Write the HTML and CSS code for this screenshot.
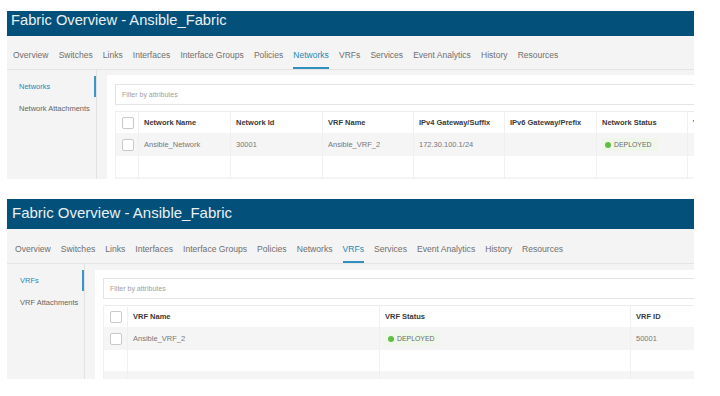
FILE: index.html
```html
<!DOCTYPE html>
<html lang="en">

<head>
    <meta charset="UTF-8">
    <meta name="viewport" content="width=device-width, initial-scale=1.0">
    <title>Fabric Overview - Ansible_Fabric</title>

    <link rel="stylesheet" href="styles.css">
</head>

<body>
    <!-- Networks tab -->
    <section class="fabric fabric-networks">
        <header class="fabric-header">
            <h1>Fabric Overview - Ansible_Fabric</h1>
        </header>

        <nav class="tabs">
            <a class="tab">Overview</a>
            <a class="tab">Switches</a>
            <a class="tab">Links</a>
            <a class="tab">Interfaces</a>
            <a class="tab">Interface Groups</a>
            <a class="tab">Policies</a>
            <a class="tab active">Networks</a>
            <a class="tab">VRFs</a>
            <a class="tab">Services</a>
            <a class="tab">Event Analytics</a>
            <a class="tab">History</a>
            <a class="tab">Resources</a>
        </nav>

        <div class="fabric-body">
            <aside class="side-nav">
                <div class="side-item active">Networks</div>
                <div class="side-item">Network Attachments</div>
            </aside>

            <div class="content">
                <div class="filter">Filter by attributes</div>
                <table class="grid grid-networks">
                    <colgroup>
                        <col style="width: 23px">
                        <col style="width: 92px">
                        <col style="width: 92px">
                        <col style="width: 91px">
                        <col style="width: 91px">
                        <col style="width: 92px">
                        <col style="width: 91px">
                        <col style="width: 92px">
                    </colgroup>
                    <thead>
                        <tr>
                            <th><span class="checkbox"></span></th>
                            <th>Network Name</th>
                            <th>Network Id</th>
                            <th>VRF Name</th>
                            <th>IPv4 Gateway/Suffix</th>
                            <th>IPv6 Gateway/Prefix</th>
                            <th>Network Status</th>
                            <th>VLAN ID</th>
                        </tr>
                    </thead>
                    <tbody>
                        <tr>
                            <td><span class="checkbox"></span></td>
                            <td>Ansible_Network</td>
                            <td>30001</td>
                            <td>Ansible_VRF_2</td>
                            <td>172.30.100.1/24</td>
                            <td></td>
                            <td><span class="status"><span class="dot"></span>DEPLOYED</span></td>
                            <td></td>
                        </tr>
                        <tr class="empty">
                            <td></td><td></td><td></td><td></td><td></td><td></td><td></td><td></td>
                        </tr>
                        <tr class="empty">
                            <td></td><td></td><td></td><td></td><td></td><td></td><td></td><td></td>
                        </tr>
                    </tbody>
                </table>
            </div>
        </div>
    </section>

    <!-- VRFs tab -->
    <section class="fabric fabric-vrfs">
        <header class="fabric-header">
            <h1>Fabric Overview - Ansible_Fabric</h1>
        </header>

        <nav class="tabs">
            <a class="tab">Overview</a>
            <a class="tab">Switches</a>
            <a class="tab">Links</a>
            <a class="tab">Interfaces</a>
            <a class="tab">Interface Groups</a>
            <a class="tab">Policies</a>
            <a class="tab">Networks</a>
            <a class="tab active">VRFs</a>
            <a class="tab">Services</a>
            <a class="tab">Event Analytics</a>
            <a class="tab">History</a>
            <a class="tab">Resources</a>
        </nav>

        <div class="fabric-body">
            <aside class="side-nav">
                <div class="side-item active">VRFs</div>
                <div class="side-item">VRF Attachments</div>
            </aside>

            <div class="content">
                <div class="filter">Filter by attributes</div>
                <table class="grid grid-vrfs">
                    <colgroup>
                        <col style="width: 24px">
                        <col style="width: 252px">
                        <col style="width: 251px">
                        <col style="width: 92px">
                    </colgroup>
                    <thead>
                        <tr>
                            <th><span class="checkbox"></span></th>
                            <th>VRF Name</th>
                            <th>VRF Status</th>
                            <th>VRF ID</th>
                        </tr>
                    </thead>
                    <tbody>
                        <tr>
                            <td><span class="checkbox"></span></td>
                            <td>Ansible_VRF_2</td>
                            <td><span class="status"><span class="dot"></span>DEPLOYED</span></td>
                            <td>50001</td>
                        </tr>
                        <tr class="empty">
                            <td></td><td></td><td></td><td></td>
                        </tr>
                        <tr class="empty">
                            <td></td><td></td><td></td><td></td>
                        </tr>
                    </tbody>
                </table>
            </div>
        </div>
    </section>
</body>

</html>
```

FILE: styles.css
```css
body {
    font-family: 'Liberation Sans', Arial, sans-serif;
    background-color: #ffffff;
    margin: 0;
    padding: 0;
    color: #666;
}

.fabric {
    width: 687px;
    margin-left: 7px;
    overflow: hidden;
    background-color: #f4f4f4;
}

.fabric-networks {
    margin-top: 11px;
    height: 168px;
}

.fabric-vrfs {
    margin-top: 20px;
    height: 180px;
}

/* dark title bar */
.fabric-header {
    background-color: #03507a;
}

.fabric-header h1 {
    margin: 0;
    font-weight: normal;
    color: #e9f0f4;
    white-space: nowrap;
}

.fabric-networks .fabric-header {
    height: 25px;
    padding-left: 4px;
}

.fabric-networks .fabric-header h1 {
    font-size: 14.7px;
    line-height: 18px;
}

.fabric-vrfs .fabric-header {
    height: 30px;
    padding-left: 5px;
}

.fabric-vrfs .fabric-header h1 {
    font-size: 15px;
    line-height: 28px;
}

/* tab strip */
.tabs {
    display: flex;
    height: 33px;
    border-bottom: 1px solid #e4e4e4;
    white-space: nowrap;
}

.fabric-networks .tabs {
    padding-left: 6px;
    gap: 10.2px;
    font-size: 8.5px;
}

.fabric-vrfs .tabs {
    height: 34px;
    padding-left: 8px;
    gap: 10px;
    font-size: 8.6px;
}

.tab {
    box-sizing: border-box;
    padding-top: 7px;
    line-height: 24px;
    color: #6f6f6f;
    border-bottom: 2px solid transparent;
}

.fabric-vrfs .tab {
    padding-top: 8px;
}

.tab.active {
    color: #2a86b2;
    border-bottom-color: #2f8fbe;
}

/* body: side menu + main card */
.fabric-body {
    display: flex;
    align-items: flex-start;
}

.side-nav {
    box-sizing: border-box;
    flex: 0 0 auto;
    height: 200px;
    padding-top: 6px;
    border-right: 1px solid #e2e2e2;
    font-size: 7.5px;
}

.fabric-networks .side-nav {
    width: 90px;
}

.fabric-vrfs .side-nav {
    width: 78px;
}

.side-item {
    height: 21px;
    line-height: 21px;
    margin-bottom: 1px;
    padding-left: 12px;
    color: #666;
    border-right: 2px solid transparent;
    white-space: nowrap;
}

.fabric-vrfs .side-item {
    padding-left: 13px;
}

.side-item.active {
    color: #2a86b2;
    border-right-color: #3b95c5;
}

.content {
    flex: 0 0 auto;
    width: 720px;
    height: 200px;
    margin-left: 10px;
    padding: 9px 0 0 8px;
    background-color: #ffffff;
}

.fabric-networks .content {
    margin-top: 5px;
}

.fabric-vrfs .content {
    margin-top: 6px;
    padding-top: 8px;
}

.filter {
    box-sizing: border-box;
    height: 21px;
    line-height: 19px;
    margin-bottom: 6px;
    padding-left: 6px;
    border: 1px solid #e4e4e4;
    font-size: 7px;
    color: #a0a0a0;
}

/* data table */
.grid {
    border-collapse: collapse;
    table-layout: fixed;
    font-size: 7.5px;
    border-top: 1px solid #ececec;
    border-left: 1px solid #ececec;
}

.grid-networks {
    width: 664px;
}

.grid-vrfs {
    width: 619px;
}

.grid th,
.grid td {
    padding: 0 0 0 5px;
    text-align: left;
    border-left: 1px solid #f0f0f0;
    white-space: nowrap;
    overflow: hidden;
}

.grid th {
    height: 21px;
    color: #383838;
    font-weight: bold;
}

.grid td {
    height: 23px;
    color: #777;
}

.grid tbody tr:nth-child(odd) {
    background-color: #f5f5f5;
}

.grid tr.empty td {
    height: 21px;
}

.grid th:first-child,
.grid td:first-child {
    padding-left: 6px;
}

.checkbox {
    display: block;
    width: 10px;
    height: 10px;
    border: 1px solid #c9c9c9;
    border-radius: 2px;
    background-color: #ffffff;
}

.status {
    display: inline-flex;
    align-items: center;
    gap: 3px;
    padding: 3px 5px 3px 3px;
    background-color: #eef7ea;
    color: #6a6a6a;
    font-size: 6.9px;
}

.dot {
    width: 6px;
    height: 6px;
    border-radius: 50%;
    background-color: #62bd45;
}
```
